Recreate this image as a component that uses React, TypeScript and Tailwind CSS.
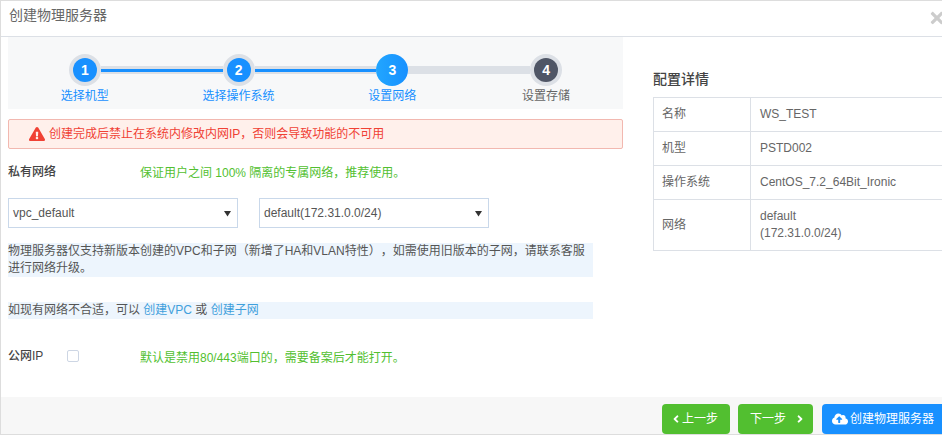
import { FaExclamationTriangle, FaTimes, FaCloudUploadAlt, FaAngleLeft, FaAngleRight } from "react-icons/fa";

const font = { fontFamily: '"Liberation Sans", "Noto Sans CJK SC", sans-serif' };

function Step({ n, label, left, right, state }: { n: number; label: string; left: string; right: string; state: "done" | "now" | "todo" }) {
  const seg = (kind: string) =>
    kind === "none" ? (
      <div className="flex-1" />
    ) : (
      <div className="flex h-2 flex-1 items-center bg-[#dce0e6]">
        {kind === "blue" && <div className="h-[3px] w-full bg-[#1890ff]" />}
      </div>
    );
  return (
    <div className="flex flex-col">
      <div className="flex items-center">
        {seg(left)}
        {state === "now" ? (
          <div className="flex h-8 w-8 items-center justify-center rounded-full bg-gradient-to-r from-[#22a6ff] to-[#1890ff] text-sm font-bold text-white">{n}</div>
        ) : (
          <div className="flex h-8 w-8 items-center justify-center rounded-full bg-[#dce0e6]">
            <div className={`flex h-6 w-6 items-center justify-center rounded-full text-sm font-bold text-white ${state === "done" ? "bg-[#1890ff]" : "bg-[#4f5666]"}`}>{n}</div>
          </div>
        )}
        {seg(right)}
      </div>
      <div className={`text-center text-xs leading-5 ${state === "todo" ? "text-[#666]" : "text-[#1890ff]"}`}>{label}</div>
    </div>
  );
}

function Select({ value }: { value: string }) {
  return (
    <div className="flex h-[30px] w-[230px] items-center justify-between border border-[#c9d8ea] pl-1 pr-1.5 text-xs text-[#555]">
      <span>{value}</span>
      <svg width="7" height="7" viewBox="0 0 8 8">
        <path d="M0 1h8L4 7.5z" fill="#333" />
      </svg>
    </div>
  );
}

const rows: [string, React.ReactNode][] = [
  ["名称", "WS_TEST"],
  ["机型", "PSTD002"],
  ["操作系统", "CentOS_7.2_64Bit_Ironic"],
  ["网络", <>default<br />(172.31.0.0/24)</>],
];

export default function App() {
  return (
    <div style={font} className="relative flex h-[435px] w-[942px] flex-col overflow-hidden border-t border-l border-[#ddd] bg-white text-xs text-[#555]">
      <div className="h-9 shrink-0 border-b border-[#dce0e6] pl-2 pt-1 text-sm leading-5 text-[#666]">创建物理服务器</div>
      <FaTimes className="absolute -right-1 top-2 text-lg text-[#ccc]" />

      <div className="flex flex-1 pl-[7px]">
        <div className="w-[615px] shrink-0">
          <div className="grid h-18 grid-cols-4 bg-[#f7f8f9] pt-[17px]">
            <Step n={1} label="选择机型" left="none" right="blue" state="done" />
            <Step n={2} label="选择操作系统" left="blue" right="blue" state="done" />
            <Step n={3} label="设置网络" left="blue" right="gray" state="now" />
            <Step n={4} label="设置存储" left="gray" right="none" state="todo" />
          </div>

          <div className="mt-2.5 flex h-[30px] items-center gap-1 rounded-xs border border-[#f2b8b0] bg-[#fff0eb] pl-5 text-xs text-[#f04134]">
            <FaExclamationTriangle className="text-base" />
            <span>创建完成后禁止在系统内修改内网IP，否则会导致功能的不可用</span>
          </div>

          <div className="mt-3 flex items-center leading-5">
            <span className="w-[132px] font-medium text-[#444]">私有网络</span>
            <span className="mt-0.5 text-[#52bf30]">保证用户之间 100% 隔离的专属网络，推荐使用。</span>
          </div>

          <div className="mt-[15px] flex gap-[21px]">
            <Select value="vpc_default" />
            <Select value="default(172.31.0.0/24)" />
          </div>

          <p className="mt-[15px] w-[585px] bg-[#edf5fd] leading-[17px] text-[#555] [text-spacing-trim:space-all]">
            物理服务器仅支持新版本创建的VPC和子网（新增了HA和VLAN特性），如需使用旧版本的子网，请联系客服<br />进行网络升级。
          </p>

          <p className="mt-[25px] w-[585px] bg-[#edf5fd] leading-[17px] text-[#555]">
            如现有网络不合适，可以 <span className="text-[#3fa0dc]">创建VPC</span> 或 <span className="text-[#3fa0dc]">创建子网</span>
          </p>

          <div className="mt-[25px] flex items-center leading-5">
            <span className="w-[59px] font-medium text-[#444]">公网IP</span>
            <span className="h-3 w-3 rounded-xs border border-[#cdd6e4]" />
            <span className="ml-[61px] mt-1 text-[#52bf30]">默认是禁用80/443端口的，需要备案后才能打开。</span>
          </div>
        </div>

        <div className="ml-[30px] w-[290px] shrink-0 pt-[32px]">
          <h3 className="text-sm font-medium leading-5 text-[#444]">配置详情</h3>
          <table className="mt-2 w-full border-collapse text-xs leading-[17px] text-[#666]">
            <tbody>
              {rows.map(([k, v]) => (
                <tr key={k}>
                  <td className="h-[34px] w-[97px] border border-[#dce0e6] pl-2">{k}</td>
                  <td className="h-[34px] border border-[#dce0e6] pl-[9px] py-2">{v}</td>
                </tr>
              ))}
            </tbody>
          </table>
        </div>
      </div>

      <div className="flex h-[38px] shrink-0 items-end border-b border-[#ddd] bg-[#f7f7f7] pl-[661px]">
        <button className="flex h-[30px] w-[68px] shrink-0 items-center rounded-sm bg-[#52bf30] pl-2 text-xs text-white">
          <FaAngleLeft />上一步
        </button>
        <button className="ml-2 flex h-[30px] w-[75px] shrink-0 items-center gap-2 rounded-sm bg-[#52bf30] pl-3 text-xs text-white">
          下一步<FaAngleRight />
        </button>
        <button className="ml-[9px] flex h-[30px] w-[130px] shrink-0 items-center gap-0.5 rounded-sm bg-[#1890ff] pl-2.5 text-xs text-white">
          <FaCloudUploadAlt className="text-base" />创建物理服务器
        </button>
      </div>
    </div>
  );
}
